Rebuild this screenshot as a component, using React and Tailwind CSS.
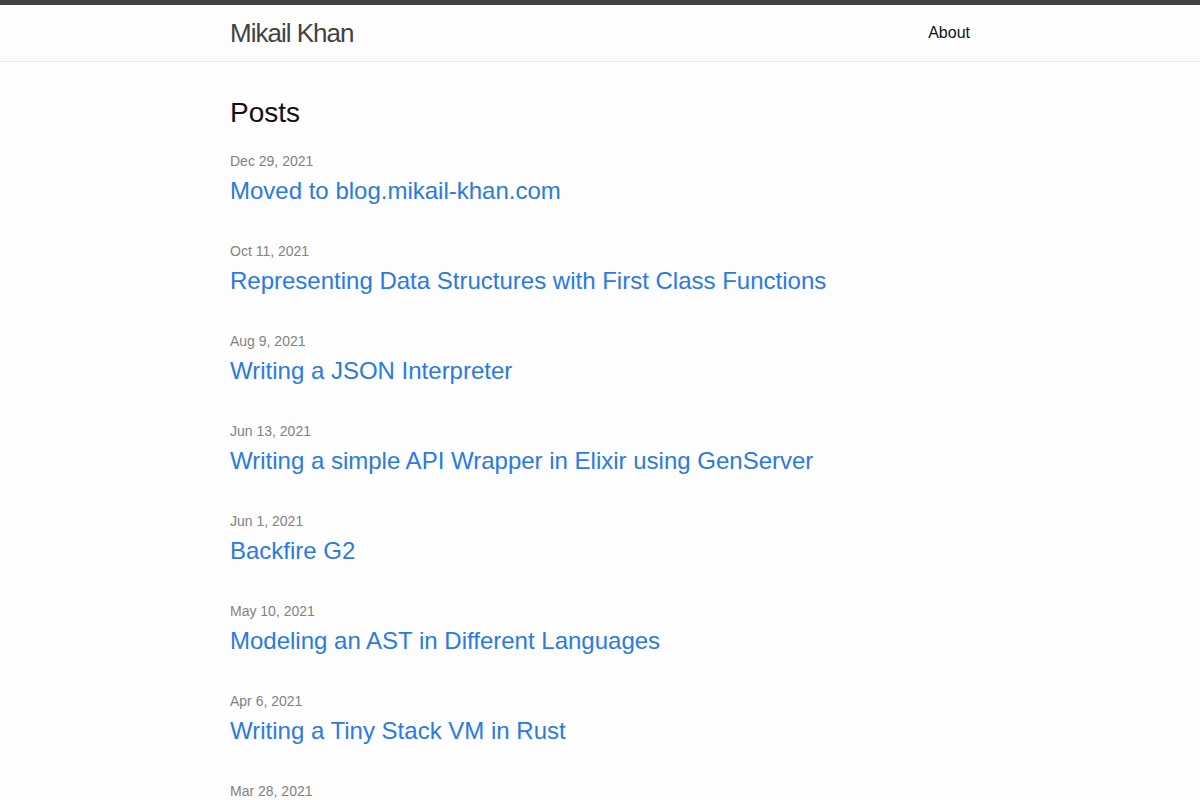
const posts = [
  { date: 'Dec 29, 2021', title: 'Moved to blog.mikail-khan.com' },
  { date: 'Oct 11, 2021', title: 'Representing Data Structures with First Class Functions' },
  { date: 'Aug 9, 2021', title: 'Writing a JSON Interpreter' },
  { date: 'Jun 13, 2021', title: 'Writing a simple API Wrapper in Elixir using GenServer' },
  { date: 'Jun 1, 2021', title: 'Backfire G2' },
  { date: 'May 10, 2021', title: 'Modeling an AST in Different Languages' },
  { date: 'Apr 6, 2021', title: 'Writing a Tiny Stack VM in Rust' },
  { date: 'Mar 28, 2021', title: 'Parsing with Combinators' },
]

const App = () => {
  return (
    <div className="min-h-screen bg-[#fdfdfd] text-[#111] font-['Liberation_Sans',Arial,sans-serif]">
      <header className="border-t-[5px] border-b border-t-[#424242] border-b-[#e8e8e8]">
        <div className="mx-auto flex max-w-[740px] items-center justify-between">
          <a href="#" className="text-[26px] leading-[56px] font-light tracking-[-1px] text-[#424242]">
            Mikail Khan
          </a>
          <nav>
            <a href="#" className="text-[16px] leading-[54px] text-[#111]">About</a>
          </nav>
        </div>
      </header>
      <main className="mx-auto max-w-[740px] py-[30px]">
        <h2 className="mb-[16px] text-[28px] leading-[42px]">Posts</h2>
        <ul>
          {posts.map((p) => (
            <li key={p.title} className="mb-[31px]">
              <span className="block text-[14px] leading-[23px] text-[#828282]">{p.date}</span>
              <h3 className="text-[24px] leading-[36px]">
                <a href="#" className="text-[#2a7ae2]">{p.title}</a>
              </h3>
            </li>
          ))}
        </ul>
      </main>
    </div>
  )
}

export default App
